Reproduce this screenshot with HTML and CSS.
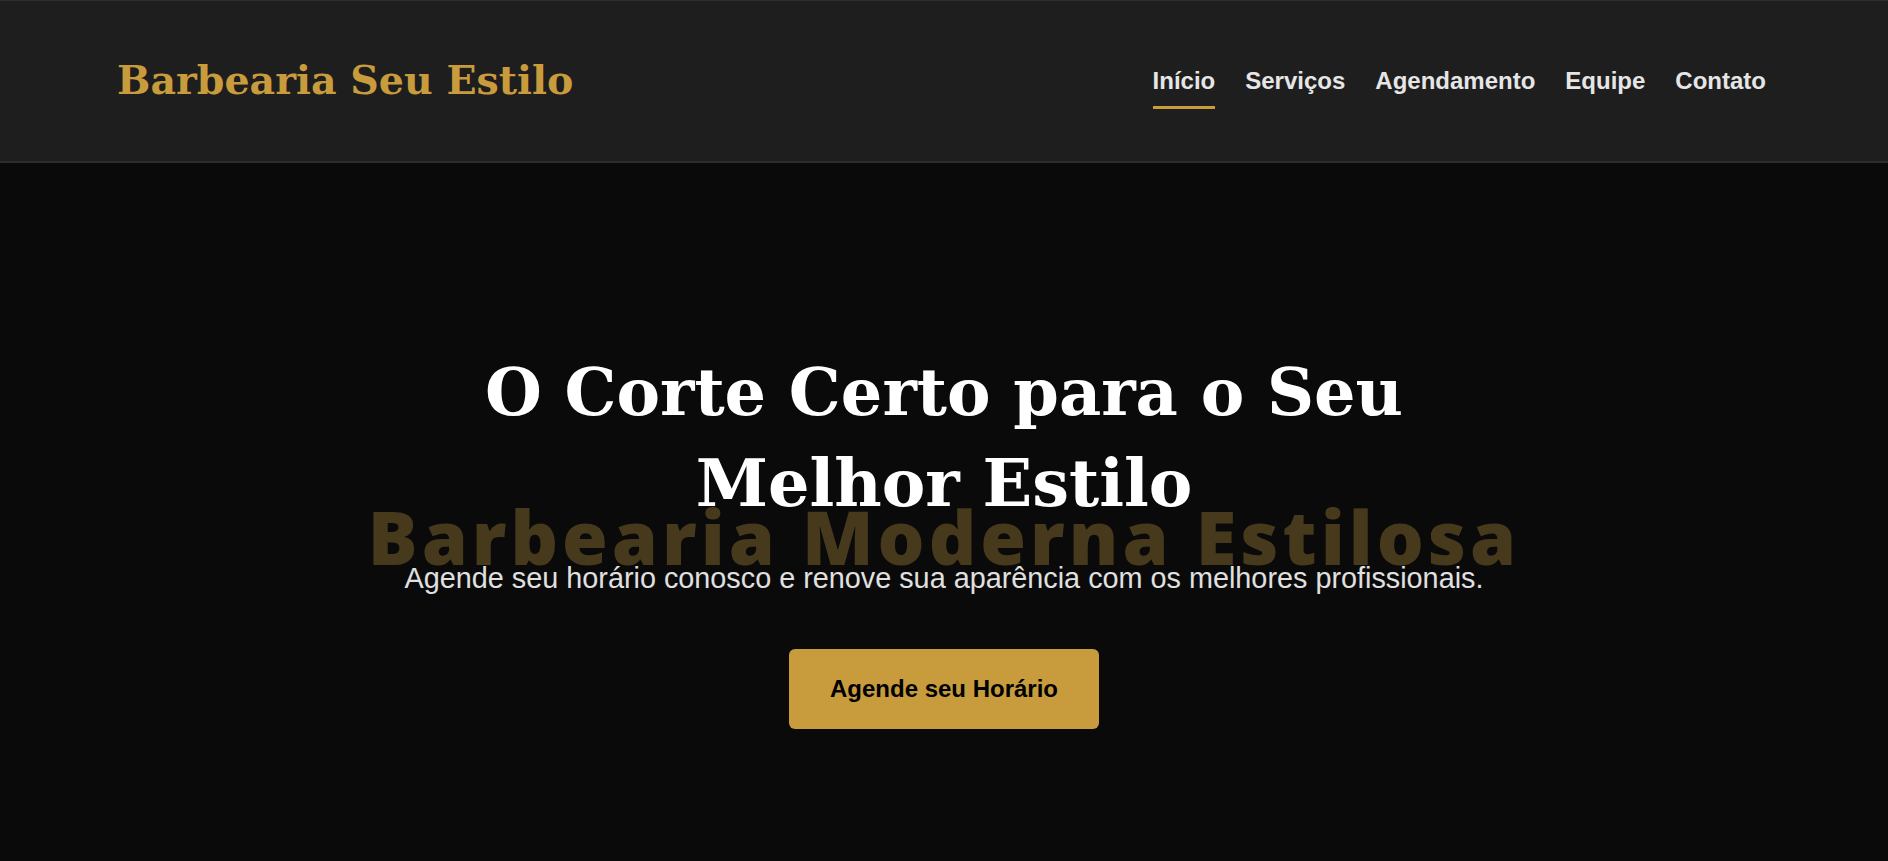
FILE: index.html
```html
<!DOCTYPE html>
<html lang="pt-BR">
<head>
<meta charset="utf-8">
<title>Barbearia Seu Estilo</title>
<link rel="stylesheet" href="styles.css">
</head>
<body>
<header class="site-header">
  <a class="logo" href="#">Barbearia Seu Estilo</a>
  <nav class="main-nav">
    <a class="nav-link active" href="#">Início</a>
    <a class="nav-link" href="#">Serviços</a>
    <a class="nav-link" href="#">Agendamento</a>
    <a class="nav-link" href="#">Equipe</a>
    <a class="nav-link" href="#">Contato</a>
  </nav>
</header>
<main>
  <section class="hero">
    <div class="hero-content">
      <h1 class="hero-title">O Corte Certo para o Seu Melhor Estilo</h1>
      <div class="hero-watermark" aria-hidden="true">Barbearia Moderna Estilosa</div>
      <p class="hero-text">Agende seu horário conosco e renove sua aparência com os melhores profissionais.</p>
      <a class="btn-primary" href="#">Agende seu Horário</a>
    </div>
  </section>
</main>
</body>
</html>
```

FILE: styles.css
```css
* { box-sizing: border-box; }
html, body { margin: 0; padding: 0; }
body {
  background: #0a0a0a;
  color: #e0e0e0;
  font-family: "Liberation Sans", Arial, sans-serif;
  min-height: 100vh;
}
a { text-decoration: none; }

.site-header {
  display: flex;
  align-items: center;
  justify-content: space-between;
  height: 163px;
  padding: 0 122px 0 117px;
  background: #1e1e1e;
  border-top: 1px solid #2e2e2e;
  border-bottom: 2px solid #2c2c2c;
}
.logo {
  font-family: "DejaVu Serif", Georgia, serif;
  font-weight: 700;
  font-size: 39.5px;
  color: #c89b3c;
  letter-spacing: 0;
  margin-top: -3px;
}
.main-nav {
  display: flex;
  gap: 30px;
  padding-top: 14px;
}
.nav-link {
  font-size: 24px;
  font-weight: 700;
  color: #e6e6e6;
  padding: 0 0 11px;
  border-bottom: 3px solid transparent;
}
.nav-link.active { border-bottom-color: #c89b3c; }

.hero {
  background: #0a0a0a;
  min-height: 698px;
  padding-top: 184px;
  display: flex;
  justify-content: center;
}
.hero-content {
  position: relative;
  max-width: 1100px;
  text-align: center;
  display: flex;
  flex-direction: column;
  align-items: center;
}
.hero-title {
  position: relative;
  z-index: 1;
  margin: 0;
  font-family: "DejaVu Serif", Georgia, serif;
  font-weight: 700;
  font-size: 65.3px;
  line-height: 91px;
  color: #ffffff;
}
.hero-watermark {
  position: absolute;
  left: 50%;
  top: 139px;
  transform: translateX(-50%);
  white-space: nowrap;
  font-family: "Open Sans", sans-serif;
  font-weight: 800;
  font-size: 74px;
  letter-spacing: 4px;
  color: #47391c;
  z-index: 0;
}
.hero-text {
  position: relative;
  z-index: 1;
  margin: 29px 0 0;
  font-size: 28.8px;
  line-height: 40px;
  color: #e0e0e0;
}
.btn-primary {
  position: relative;
  z-index: 1;
  margin-top: 51px;
  display: inline-block;
  background: #c89b3c;
  color: #000;
  font-size: 24px;
  font-weight: 700;
  line-height: 28px;
  padding: 26px 41px;
  border-radius: 6px;
}
```
